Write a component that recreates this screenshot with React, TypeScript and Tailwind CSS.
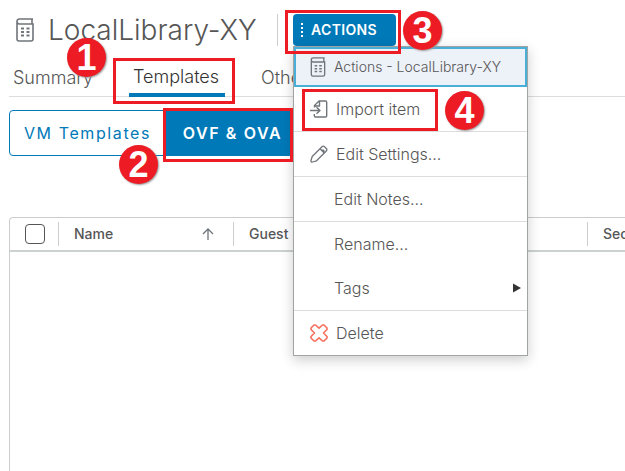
import type { ReactNode } from "react";

function LibraryIcon({ className }: { className: string }) {
  return (
    <svg viewBox="0 0 18 24" className={className} fill="none" stroke="#70757a" aria-hidden="true">
      <path d="M17 1H3.500A2.300 2.300 0 0 0 1 3.300V21a2 2 0 0 0 2 2h12a2 2 0 0 0 2-2V6H3.500A2.300 2.300 0 0 1 1 3.700M16 1.500V5.500" strokeWidth="1.600" />
      <path d="M5 10.500h3M5 14h3M5 17.500h3M10.500 10.500h3M10.500 14h3M10.500 17.500h3" strokeWidth="1.800" />
    </svg>
  );
}

function ImportIcon() {
  return (
    <svg viewBox="0 0 18 18" className="size-[18px]" fill="none" stroke="#70757a" strokeWidth="1.400" strokeLinejoin="round" aria-hidden="true">
      <path d="M4.500 7.500V5.500L9 1h6.500a1.200 1.200 0 0 1 1.200 1.200v13.600a1.200 1.200 0 0 1-1.200 1.200h-10a1.200 1.200 0 0 1-1.200-1.200V14M5 6h4.500V1.500" />
      <path d="M0 10.500h10M6.500 7.200l3.500 3.300-3.500 3.300" />
    </svg>
  );
}

function PencilIcon() {
  return (
    <svg viewBox="0 0 18 18" className="size-[18px]" fill="none" stroke="#70757a" strokeWidth="1.300" strokeLinejoin="round" aria-hidden="true">
      <path d="M1 15.500l1.200-4L12 1.700a1.800 1.800 0 0 1 2.500 0l1.800 1.800a1.800 1.800 0 0 1 0 2.500L6.500 15.800l-4 1.200a1.200 1.200 0 0 1-1.500-1.500zM10 3.700l4.300 4.300M12.500 4.500l2 2" />
    </svg>
  );
}

function DeleteIcon() {
  return (
    <svg viewBox="0 0 18 18" className="size-[18px]" fill="none" stroke="#f76f5c" strokeWidth="1.600" strokeLinejoin="round" aria-hidden="true">
      <path d="M5.500 1 9 4.200 12.500 1H14l3 3v1.500L13.500 9l3.500 3.500V14l-3 3h-1.500L9 13.800 5.500 17H4l-3-3v-1.500L4.500 9 1 5.500V4l3-3z" />
    </svg>
  );
}

function MenuItem({ icon, children, arrow }: { icon?: ReactNode; children: ReactNode; arrow?: boolean }) {
  return (
    <button type="button" role="menuitem" className="flex h-11 w-full items-center pl-4 pr-1.5 text-left text-base font-light text-[#565656]">
      <span className="flex w-6 shrink-0">{icon}</span>
      <span className={icon ? "flex-1 pl-0.5" : "flex-1"}>{children}</span>
      {arrow && (
        <svg viewBox="0 0 8 10" className="h-2.5 w-2" fill="#333" aria-hidden="true">
          <path d="M0 0.500l8 4.500-8 4.500z" />
        </svg>
      )}
    </button>
  );
}

function Badge({ number, place }: { number: number; place: string }) {
  return (
    <span className={`absolute z-30 flex size-[39px] items-center justify-center rounded-full bg-[#ed1c24] font-['Liberation_Sans',sans-serif] text-4xl font-bold text-white shadow-[1px_1px_2px_#999] ${place}`}>
      {number}
    </span>
  );
}

function Outline({ place }: { place: string }) {
  return <span className={`pointer-events-none absolute z-20 border-[3px] border-[#ed1c24] ${place}`} />;
}

function ActionsMenu() {
  return (
    <div role="menu" className="absolute left-0 top-full z-10 w-[235px] border border-[#a0a4a3] bg-white shadow-[0_4px_12px_#0003]">
      <div className="flex h-10 items-center border-2 border-[#49afd9] bg-[#edf1f8] pl-3.5 text-sm font-light text-[#565656]">
        <LibraryIcon className="mr-2 h-5 w-4" />
        Actions - LocalLibrary-XY
      </div>
      <div className="relative border-b border-[#ddd]">
        <MenuItem icon={<ImportIcon />}>Import item</MenuItem>
        <Outline place="left-2 top-0.5 h-[42px] w-[136px]" />
        <Badge number={4} place="left-[151px] top-1" />
      </div>
      <div className="border-b border-[#ddd]">
        <MenuItem icon={<PencilIcon />}>Edit Settings...</MenuItem>
      </div>
      <div className="border-b border-[#ddd]">
        <MenuItem>Edit Notes...</MenuItem>
      </div>
      <div className="border-b border-[#ddd]">
        <MenuItem>Rename...</MenuItem>
        <MenuItem arrow>Tags</MenuItem>
      </div>
      <MenuItem icon={<DeleteIcon />}>Delete</MenuItem>
    </div>
  );
}

function ColumnHeader({ children }: { children: ReactNode }) {
  return (
    <th scope="col" className="p-0 text-left font-medium">
      <div className="flex h-6 items-center border-l border-[#ccc] px-[15px] whitespace-nowrap">{children}</div>
    </th>
  );
}

export default function App() {
  return (
    <main className="flex min-h-screen flex-col overflow-hidden bg-white pl-[9px] pt-3.5 font-[Inter,'Noto_Sans',sans-serif] text-[#565656]">
      <header className="flex h-8 items-center pl-[7px]">
        <LibraryIcon className="h-6 w-[18px] shrink-0" />
        <h1 className="ml-3.5 w-[229px] shrink-0 text-[28px] leading-8 font-light whitespace-nowrap">LocalLibrary-XY</h1>
        <div className="h-8 border-l border-[#ccc] pl-[15px]">
          <div className="relative">
            <button type="button" aria-haspopup="menu" aria-expanded="true" className="flex h-8 w-[103px] items-center gap-2 rounded-[4px] bg-[#0079b8] pl-2 text-sm font-semibold tracking-wide text-white">
              <svg viewBox="0 0 2 14" className="h-3.5 w-0.5" fill="white" aria-hidden="true">
                <path d="M0 0h2v2H0zM0 4h2v2H0zM0 8h2v2H0zM0 12h2v2H0z" />
              </svg>
              ACTIONS
            </button>
            <ActionsMenu />
            <Outline place="-left-2 -top-1 h-11 w-[116px]" />
            <Badge number={3} place="left-[110px] -top-[3px]" />
          </div>
        </div>
      </header>

      <nav className="relative mt-3.5 flex h-[37px] items-stretch gap-9 border-b border-[#ddd] pl-1 text-lg font-light">
        <a href="#summary" className="flex items-center">Summary</a>
        <a href="#templates" aria-current="page" className="relative -mb-px flex items-center border-b-4 border-[#0079b8] pl-1 pr-1.5 text-[#333]">
          Templates
          <Outline place="-left-4 -top-0.5 h-[46px] w-[122px]" />
        </a>
        <a href="#other" className="flex items-center">Other Types</a>
        <Badge number={1} place="left-[58px] -top-[22px]" />
      </nav>

      <div className="relative mt-[13px] flex h-[46px] text-base">
        <button type="button" className="w-[157px] rounded-l-[4px] border border-[#0079b8] tracking-widest whitespace-nowrap text-[#0079b8]">VM Templates</button>
        <button type="button" aria-pressed="true" className="relative w-[133px] rounded-r-[4px] bg-[#0079b8] tracking-widest font-semibold whitespace-nowrap text-white">
          OVF &amp; OVA
          <Outline place="-left-[3px] -top-0.5 h-[54px] w-[130px]" />
        </button>
        <Badge number={2} place="left-[110px] top-[35px]" />
      </div>

      <section className="mt-[61px] flex-1 rounded-tl-[4px] border-l border-t border-[#ccc]">
        <table className="w-full min-w-[650px] table-fixed border-collapse text-sm">
          <colgroup>
            <col className="w-12" />
            <col className="w-[175px]" />
            <col className="w-[354px]" />
            <col />
          </colgroup>
          <thead>
            <tr className="h-[33px] border-b-2 border-[#ccd2cf]">
              <th scope="col" className="p-0">
                <div className="flex pl-[15px]">
                  <input type="checkbox" aria-label="Select all" className="size-5 appearance-none rounded-[4px] border border-[#565656] bg-white" />
                </div>
              </th>
              <ColumnHeader>
                <span className="flex-1">Name</span>
                <svg viewBox="0 0 12 12" className="mr-1 size-3" fill="none" stroke="#70757a" strokeWidth="1.300" aria-hidden="true">
                  <path d="M6 12V1M1 6l5-5 5 5" />
                </svg>
              </ColumnHeader>
              <ColumnHeader>Guest</ColumnHeader>
              <ColumnHeader>Security Compliance</ColumnHeader>
            </tr>
          </thead>
          <tbody />
        </table>
      </section>
    </main>
  );
}
